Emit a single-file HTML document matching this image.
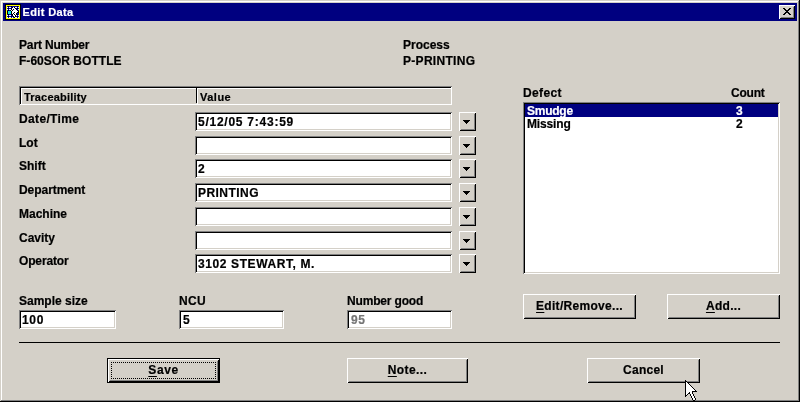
<!DOCTYPE html>
<html><head><meta charset="utf-8"><title>Edit Data</title>
<style>
html,body{margin:0;padding:0;}
body{width:800px;height:402px;overflow:hidden;background:#d4d0c8;font-family:"Liberation Sans",sans-serif;font-size:12px;font-weight:bold;color:#000;position:relative;-webkit-text-stroke:0.2px currentColor;}
#root{position:absolute;left:0;top:0;width:800px;height:402px;will-change:transform;}
.a{position:absolute;box-sizing:border-box;}
.t{position:absolute;white-space:pre;line-height:14px;height:14px;}
#win{left:0;top:0;width:800px;height:402px;background:#d4d0c8;box-shadow:inset -1px -1px 0 #000,inset 1px 1px 0 #d4d0c8,inset -2px -2px 0 #808080,inset 2px 2px 0 #fff;}
#title{left:3px;top:3px;width:794px;height:18px;background:#000080;}
#ttext{left:22.5px;top:5px;color:#fff;font-size:11px;letter-spacing:0.38px;}
.in{background:#fff;box-shadow:inset 1px 1px 0 #808080,inset -1px -1px 0 #fff,inset 2px 2px 0 #000,inset -2px -2px 0 #d4d0c8;}
.btn{background:#d4d0c8;box-shadow:inset 1px 1px 0 #fff,inset -1px -1px 0 #000,inset 2px 2px 0 #d4d0c8,inset -2px -2px 0 #808080;}
.def{background:#d4d0c8;box-shadow:inset 0 0 0 1px #000,inset 2px 2px 0 #fff,inset -2px -2px 0 #000,inset 3px 3px 0 #d4d0c8,inset -3px -3px 0 #808080;}
.bt{position:absolute;left:0;right:0;text-align:center;white-space:pre;line-height:14px;}
u{text-decoration:underline;text-decoration-thickness:1px;text-underline-offset:1.5px;text-decoration-skip-ink:none;}
.hdr{box-shadow:inset 1px 1px 0 #808080,inset -1px -1px 0 #fff,inset 2px 2px 0 #000,inset 3px 3px 0 #fff;}
.arr{position:absolute;left:5px;top:8px;width:0;height:0;border-left:4px solid transparent;border-right:4px solid transparent;border-top:4px solid #000;}
.foc{left:4px;top:4px;width:105px;height:17px;border:1px dotted #000;}
</style></head><body><div id="root">
<div class="a" id="win"></div>
<div class="a" id="title"></div>
<span class="t" id="ttext">Edit Data</span>
<svg class="a" style="left:5px;top:4px;" width="16" height="16" viewBox="0 0 16 16" shape-rendering="crispEdges"><rect x="0" y="0" width="16" height="1" fill="#000"/><rect x="0" y="1" width="1" height="1" fill="#000"/><rect x="1" y="1" width="14" height="1" fill="#ffff00"/><rect x="15" y="1" width="1" height="1" fill="#000"/><rect x="0" y="2" width="1" height="1" fill="#000"/><rect x="1" y="2" width="1" height="1" fill="#ffff00"/><rect x="2" y="2" width="1" height="1" fill="#0000a8"/><rect x="3" y="2" width="1" height="1" fill="#000"/><rect x="4" y="2" width="2" height="1" fill="#0000a8"/><rect x="6" y="2" width="1" height="1" fill="#000"/><rect x="7" y="2" width="5" height="1" fill="#0000a8"/><rect x="12" y="2" width="1" height="1" fill="#000"/><rect x="13" y="2" width="1" height="1" fill="#0000a8"/><rect x="14" y="2" width="1" height="1" fill="#ffff00"/><rect x="15" y="2" width="1" height="1" fill="#000"/><rect x="0" y="3" width="1" height="1" fill="#000"/><rect x="1" y="3" width="1" height="1" fill="#ffff00"/><rect x="2" y="3" width="1" height="1" fill="#fff"/><rect x="3" y="3" width="1" height="1" fill="#0000a8"/><rect x="4" y="3" width="2" height="1" fill="#fff"/><rect x="6" y="3" width="1" height="1" fill="#0000a8"/><rect x="7" y="3" width="1" height="1" fill="#000"/><rect x="8" y="3" width="1" height="1" fill="#fff"/><rect x="9" y="3" width="1" height="1" fill="#000"/><rect x="10" y="3" width="2" height="1" fill="#fff"/><rect x="12" y="3" width="1" height="1" fill="#0000a8"/><rect x="13" y="3" width="1" height="1" fill="#fff"/><rect x="14" y="3" width="1" height="1" fill="#ffff00"/><rect x="15" y="3" width="1" height="1" fill="#000"/><rect x="0" y="4" width="1" height="1" fill="#000"/><rect x="1" y="4" width="1" height="1" fill="#ffff00"/><rect x="2" y="4" width="1" height="1" fill="#0000a8"/><rect x="3" y="4" width="1" height="1" fill="#000"/><rect x="4" y="4" width="2" height="1" fill="#0000a8"/><rect x="6" y="4" width="1" height="1" fill="#000"/><rect x="7" y="4" width="3" height="1" fill="#fff"/><rect x="10" y="4" width="1" height="1" fill="#000"/><rect x="11" y="4" width="1" height="1" fill="#0000a8"/><rect x="12" y="4" width="1" height="1" fill="#000"/><rect x="13" y="4" width="1" height="1" fill="#0000a8"/><rect x="14" y="4" width="1" height="1" fill="#ffff00"/><rect x="15" y="4" width="1" height="1" fill="#000"/><rect x="0" y="5" width="1" height="1" fill="#000"/><rect x="1" y="5" width="1" height="1" fill="#ffff00"/><rect x="2" y="5" width="1" height="1" fill="#fff"/><rect x="3" y="5" width="1" height="1" fill="#0000a8"/><rect x="4" y="5" width="2" height="1" fill="#fff"/><rect x="6" y="5" width="1" height="1" fill="#000"/><rect x="7" y="5" width="1" height="1" fill="#fff"/><rect x="8" y="5" width="1" height="1" fill="#000"/><rect x="9" y="5" width="2" height="1" fill="#fff"/><rect x="11" y="5" width="1" height="1" fill="#000"/><rect x="12" y="5" width="1" height="1" fill="#0000a8"/><rect x="13" y="5" width="1" height="1" fill="#fff"/><rect x="14" y="5" width="1" height="1" fill="#ffff00"/><rect x="15" y="5" width="1" height="1" fill="#000"/><rect x="0" y="6" width="1" height="1" fill="#000"/><rect x="1" y="6" width="1" height="1" fill="#ffff00"/><rect x="2" y="6" width="1" height="1" fill="#0000a8"/><rect x="3" y="6" width="1" height="1" fill="#000"/><rect x="4" y="6" width="1" height="1" fill="#0000a8"/><rect x="5" y="6" width="1" height="1" fill="#000"/><rect x="6" y="6" width="1" height="1" fill="#fff"/><rect x="7" y="6" width="1" height="1" fill="#000"/><rect x="8" y="6" width="4" height="1" fill="#fff"/><rect x="12" y="6" width="1" height="1" fill="#000"/><rect x="13" y="6" width="1" height="1" fill="#0000a8"/><rect x="14" y="6" width="1" height="1" fill="#ffff00"/><rect x="15" y="6" width="1" height="1" fill="#000"/><rect x="0" y="7" width="1" height="1" fill="#000"/><rect x="1" y="7" width="1" height="1" fill="#ffff00"/><rect x="2" y="7" width="1" height="1" fill="#000"/><rect x="3" y="7" width="3" height="1" fill="#00e8e8"/><rect x="6" y="7" width="1" height="1" fill="#000"/><rect x="7" y="7" width="6" height="1" fill="#fff"/><rect x="13" y="7" width="1" height="1" fill="#000"/><rect x="14" y="7" width="1" height="1" fill="#ffff00"/><rect x="15" y="7" width="1" height="1" fill="#000"/><rect x="0" y="8" width="1" height="1" fill="#000"/><rect x="1" y="8" width="1" height="1" fill="#ffff00"/><rect x="2" y="8" width="1" height="1" fill="#000"/><rect x="3" y="8" width="1" height="1" fill="#00e8e8"/><rect x="4" y="8" width="1" height="1" fill="#a0a0c0"/><rect x="5" y="8" width="1" height="1" fill="#00e8e8"/><rect x="6" y="8" width="1" height="1" fill="#000"/><rect x="7" y="8" width="2" height="1" fill="#fff"/><rect x="9" y="8" width="1" height="1" fill="#000"/><rect x="10" y="8" width="2" height="1" fill="#fff"/><rect x="12" y="8" width="2" height="1" fill="#000"/><rect x="14" y="8" width="1" height="1" fill="#ffff00"/><rect x="15" y="8" width="1" height="1" fill="#000"/><rect x="0" y="9" width="1" height="1" fill="#000"/><rect x="1" y="9" width="1" height="1" fill="#ffff00"/><rect x="2" y="9" width="1" height="1" fill="#000"/><rect x="3" y="9" width="3" height="1" fill="#00e8e8"/><rect x="6" y="9" width="1" height="1" fill="#000"/><rect x="7" y="9" width="1" height="1" fill="#fff"/><rect x="8" y="9" width="1" height="1" fill="#000"/><rect x="9" y="9" width="2" height="1" fill="#fff"/><rect x="11" y="9" width="1" height="1" fill="#000"/><rect x="12" y="9" width="2" height="1" fill="#0000a8"/><rect x="14" y="9" width="1" height="1" fill="#ffff00"/><rect x="15" y="9" width="1" height="1" fill="#000"/><rect x="0" y="10" width="1" height="1" fill="#000"/><rect x="1" y="10" width="1" height="1" fill="#ffff00"/><rect x="2" y="10" width="1" height="1" fill="#0000a8"/><rect x="3" y="10" width="1" height="1" fill="#000"/><rect x="4" y="10" width="2" height="1" fill="#0000a8"/><rect x="6" y="10" width="2" height="1" fill="#000"/><rect x="8" y="10" width="1" height="1" fill="#fff"/><rect x="9" y="10" width="1" height="1" fill="#000"/><rect x="10" y="10" width="1" height="1" fill="#fff"/><rect x="11" y="10" width="2" height="1" fill="#000"/><rect x="13" y="10" width="1" height="1" fill="#0000a8"/><rect x="14" y="10" width="1" height="1" fill="#ffff00"/><rect x="15" y="10" width="1" height="1" fill="#000"/><rect x="0" y="11" width="1" height="1" fill="#000"/><rect x="1" y="11" width="1" height="1" fill="#ffff00"/><rect x="2" y="11" width="1" height="1" fill="#fff"/><rect x="3" y="11" width="1" height="1" fill="#0000a8"/><rect x="4" y="11" width="2" height="1" fill="#fff"/><rect x="6" y="11" width="1" height="1" fill="#0000a8"/><rect x="7" y="11" width="1" height="1" fill="#000"/><rect x="8" y="11" width="2" height="1" fill="#fff"/><rect x="10" y="11" width="1" height="1" fill="#000"/><rect x="11" y="11" width="1" height="1" fill="#fff"/><rect x="12" y="11" width="1" height="1" fill="#0000a8"/><rect x="13" y="11" width="1" height="1" fill="#fff"/><rect x="14" y="11" width="1" height="1" fill="#ffff00"/><rect x="15" y="11" width="1" height="1" fill="#000"/><rect x="0" y="12" width="1" height="1" fill="#000"/><rect x="1" y="12" width="1" height="1" fill="#ffff00"/><rect x="2" y="12" width="1" height="1" fill="#0000a8"/><rect x="3" y="12" width="1" height="1" fill="#000"/><rect x="4" y="12" width="2" height="1" fill="#0000a8"/><rect x="6" y="12" width="1" height="1" fill="#000"/><rect x="7" y="12" width="1" height="1" fill="#0000a8"/><rect x="8" y="12" width="1" height="1" fill="#000"/><rect x="9" y="12" width="1" height="1" fill="#fff"/><rect x="10" y="12" width="1" height="1" fill="#000"/><rect x="11" y="12" width="1" height="1" fill="#0000a8"/><rect x="12" y="12" width="1" height="1" fill="#000"/><rect x="13" y="12" width="1" height="1" fill="#0000a8"/><rect x="14" y="12" width="1" height="1" fill="#ffff00"/><rect x="15" y="12" width="1" height="1" fill="#000"/><rect x="0" y="13" width="1" height="1" fill="#000"/><rect x="1" y="13" width="1" height="1" fill="#ffff00"/><rect x="2" y="13" width="1" height="1" fill="#fff"/><rect x="3" y="13" width="1" height="1" fill="#0000a8"/><rect x="4" y="13" width="2" height="1" fill="#fff"/><rect x="6" y="13" width="1" height="1" fill="#0000a8"/><rect x="7" y="13" width="1" height="1" fill="#fff"/><rect x="8" y="13" width="1" height="1" fill="#0000a8"/><rect x="9" y="13" width="1" height="1" fill="#000"/><rect x="10" y="13" width="2" height="1" fill="#fff"/><rect x="12" y="13" width="1" height="1" fill="#0000a8"/><rect x="13" y="13" width="1" height="1" fill="#fff"/><rect x="14" y="13" width="1" height="1" fill="#ffff00"/><rect x="15" y="13" width="1" height="1" fill="#000"/><rect x="0" y="14" width="1" height="1" fill="#000"/><rect x="1" y="14" width="14" height="1" fill="#ffff00"/><rect x="15" y="14" width="1" height="1" fill="#000"/><rect x="0" y="15" width="16" height="1" fill="#000"/></svg>
<div class="a btn" style="left:779px;top:5px;width:16px;height:14px"><svg class="a" style="left:4px;top:3px;" width="8" height="7" viewBox="0 0 8 7" shape-rendering="crispEdges"><rect x="0" y="0" width="2" height="1" fill="#000"/><rect x="6" y="0" width="2" height="1" fill="#000"/><rect x="1" y="1" width="2" height="1" fill="#000"/><rect x="5" y="1" width="2" height="1" fill="#000"/><rect x="2" y="2" width="4" height="1" fill="#000"/><rect x="3" y="3" width="2" height="1" fill="#000"/><rect x="2" y="4" width="4" height="1" fill="#000"/><rect x="1" y="5" width="2" height="1" fill="#000"/><rect x="5" y="5" width="2" height="1" fill="#000"/><rect x="0" y="6" width="2" height="1" fill="#000"/><rect x="6" y="6" width="2" height="1" fill="#000"/></svg></div>
<span class="t" style="left:19px;top:38px;letter-spacing:-0.15px">Part Number</span>
<span class="t" style="left:19px;top:54px;letter-spacing:0.04px">F-60SOR BOTTLE</span>
<span class="t" style="left:403px;top:38px">Process</span>
<span class="t" style="left:403px;top:54px;letter-spacing:0.3px">P-PRINTING</span>
<div class="a" style="left:19px;top:86px;width:433px;height:19px;box-shadow:inset 1px 1px 0 #808080,inset -1px -1px 0 #fff,inset 2px 2px 0 #000"></div>
<div class="a" style="left:21px;top:88px;width:175px;height:16px;border-top:1px solid #fff;border-left:1px solid #fff"></div>
<div class="a" style="left:196px;top:88px;width:1px;height:15px;background:#000"></div>
<div class="a" style="left:197px;top:88px;width:254px;height:16px;border-top:1px solid #fff;border-left:1px solid #fff"></div>
<span class="t" style="left:24px;top:90px;letter-spacing:0.2px;font-size:11px">Traceability</span>
<span class="t" style="left:200px;top:90px;letter-spacing:0.5px;font-size:11px">Value</span>
<span class="t" style="left:19px;top:112px;letter-spacing:0.35px">Date/Time</span>
<div class="a in" style="left:195px;top:112px;width:257px;height:19px"></div>
<span class="t" style="left:198px;top:115px;letter-spacing:0.75px">5/12/05 7:43:59</span>
<div class="a btn" style="left:459px;top:112px;width:17px;height:19px"><svg class="a" style="left:4px;top:8px;" width="7" height="4" viewBox="0 0 7 4" shape-rendering="crispEdges"><rect x="0" y="0" width="7" height="1" fill="#000"/><rect x="1" y="1" width="5" height="1" fill="#000"/><rect x="2" y="2" width="3" height="1" fill="#000"/><rect x="3" y="3" width="1" height="1" fill="#000"/></svg></div>
<span class="t" style="left:19px;top:136px">Lot</span>
<div class="a in" style="left:195px;top:136px;width:257px;height:19px"></div>
<div class="a btn" style="left:459px;top:136px;width:17px;height:19px"><svg class="a" style="left:4px;top:8px;" width="7" height="4" viewBox="0 0 7 4" shape-rendering="crispEdges"><rect x="0" y="0" width="7" height="1" fill="#000"/><rect x="1" y="1" width="5" height="1" fill="#000"/><rect x="2" y="2" width="3" height="1" fill="#000"/><rect x="3" y="3" width="1" height="1" fill="#000"/></svg></div>
<span class="t" style="left:19px;top:159px">Shift</span>
<div class="a in" style="left:195px;top:159px;width:257px;height:19px"></div>
<span class="t" style="left:198px;top:162px">2</span>
<div class="a btn" style="left:459px;top:159px;width:17px;height:19px"><svg class="a" style="left:4px;top:8px;" width="7" height="4" viewBox="0 0 7 4" shape-rendering="crispEdges"><rect x="0" y="0" width="7" height="1" fill="#000"/><rect x="1" y="1" width="5" height="1" fill="#000"/><rect x="2" y="2" width="3" height="1" fill="#000"/><rect x="3" y="3" width="1" height="1" fill="#000"/></svg></div>
<span class="t" style="left:19px;top:183px;letter-spacing:-0.05px">Department</span>
<div class="a in" style="left:195px;top:183px;width:257px;height:19px"></div>
<span class="t" style="left:198px;top:186px;letter-spacing:0.45px">PRINTING</span>
<div class="a btn" style="left:459px;top:183px;width:17px;height:19px"><svg class="a" style="left:4px;top:8px;" width="7" height="4" viewBox="0 0 7 4" shape-rendering="crispEdges"><rect x="0" y="0" width="7" height="1" fill="#000"/><rect x="1" y="1" width="5" height="1" fill="#000"/><rect x="2" y="2" width="3" height="1" fill="#000"/><rect x="3" y="3" width="1" height="1" fill="#000"/></svg></div>
<span class="t" style="left:19px;top:207px">Machine</span>
<div class="a in" style="left:195px;top:207px;width:257px;height:19px"></div>
<div class="a btn" style="left:459px;top:207px;width:17px;height:19px"><svg class="a" style="left:4px;top:8px;" width="7" height="4" viewBox="0 0 7 4" shape-rendering="crispEdges"><rect x="0" y="0" width="7" height="1" fill="#000"/><rect x="1" y="1" width="5" height="1" fill="#000"/><rect x="2" y="2" width="3" height="1" fill="#000"/><rect x="3" y="3" width="1" height="1" fill="#000"/></svg></div>
<span class="t" style="left:19px;top:231px">Cavity</span>
<div class="a in" style="left:195px;top:231px;width:257px;height:19px"></div>
<div class="a btn" style="left:459px;top:231px;width:17px;height:19px"><svg class="a" style="left:4px;top:8px;" width="7" height="4" viewBox="0 0 7 4" shape-rendering="crispEdges"><rect x="0" y="0" width="7" height="1" fill="#000"/><rect x="1" y="1" width="5" height="1" fill="#000"/><rect x="2" y="2" width="3" height="1" fill="#000"/><rect x="3" y="3" width="1" height="1" fill="#000"/></svg></div>
<span class="t" style="left:19px;top:254px;letter-spacing:-0.15px">Operator</span>
<div class="a in" style="left:195px;top:254px;width:257px;height:19px"></div>
<span class="t" style="left:198px;top:257px;letter-spacing:0.6px">3102 STEWART, M.</span>
<div class="a btn" style="left:459px;top:254px;width:17px;height:19px"><svg class="a" style="left:4px;top:8px;" width="7" height="4" viewBox="0 0 7 4" shape-rendering="crispEdges"><rect x="0" y="0" width="7" height="1" fill="#000"/><rect x="1" y="1" width="5" height="1" fill="#000"/><rect x="2" y="2" width="3" height="1" fill="#000"/><rect x="3" y="3" width="1" height="1" fill="#000"/></svg></div>
<span class="t" style="left:523px;top:86px;letter-spacing:0.35px">Defect</span>
<span class="t" style="left:731px;top:86px;letter-spacing:-0.2px">Count</span>
<div class="a in" style="left:523px;top:102px;width:257px;height:172px"></div>
<div class="a" style="left:525px;top:104px;width:253px;height:13px;background:#000080"></div>
<span class="t" style="left:527px;top:104px;letter-spacing:-0.25px;color:#fff">Smudge</span>
<span class="t" style="left:736px;top:104px;color:#fff">3</span>
<span class="t" style="left:527px;top:117px;letter-spacing:-0.15px">Missing</span>
<span class="t" style="left:736px;top:117px">2</span>
<div class="a btn" style="left:523px;top:294px;width:113px;height:25px"><span class="bt" style="top:5px;letter-spacing:0.3px"><u>E</u>dit/Remove...</span></div>
<div class="a btn" style="left:667px;top:294px;width:113px;height:25px"><span class="bt" style="top:5px;letter-spacing:0.3px"><u>A</u>dd...</span></div>
<span class="t" style="left:19px;top:294px">Sample size</span>
<span class="t" style="left:179px;top:294px;letter-spacing:0.3px">NCU</span>
<span class="t" style="left:347px;top:294px;letter-spacing:-0.17px">Number good</span>
<div class="a in" style="left:19px;top:310px;width:97px;height:19px"></div>
<div class="a in" style="left:179px;top:310px;width:105px;height:19px"></div>
<div class="a in" style="left:347px;top:310px;width:105px;height:19px"></div>
<span class="t" style="left:22px;top:313px;letter-spacing:0.7px">100</span>
<span class="t" style="left:183px;top:313px">5</span>
<span class="t" style="left:351px;top:313px;letter-spacing:0.7px;color:#757575">95</span>
<div class="a" style="left:19px;top:342px;width:761px;height:1px;background:#000"></div>
<div class="a def" style="left:107px;top:358px;width:113px;height:25px"><span class="bt" style="top:5px;letter-spacing:0.6px"><u>S</u>ave</span><div class="a foc"></div></div>
<div class="a btn" style="left:347px;top:358px;width:121px;height:25px"><span class="bt" style="top:5px;letter-spacing:0.4px"><u>N</u>ote...</span></div>
<div class="a btn" style="left:587px;top:358px;width:113px;height:25px"><span class="bt" style="top:5px;letter-spacing:0.25px">Cancel</span></div>
<svg class="a" style="left:685px;top:380px;" width="12" height="21" viewBox="0 0 12 21" shape-rendering="crispEdges"><rect x="0" y="0" width="1" height="1" fill="#000"/><rect x="0" y="1" width="2" height="1" fill="#000"/><rect x="0" y="2" width="1" height="1" fill="#000"/><rect x="1" y="2" width="1" height="1" fill="#fff"/><rect x="2" y="2" width="1" height="1" fill="#000"/><rect x="0" y="3" width="1" height="1" fill="#000"/><rect x="1" y="3" width="2" height="1" fill="#fff"/><rect x="3" y="3" width="1" height="1" fill="#000"/><rect x="0" y="4" width="1" height="1" fill="#000"/><rect x="1" y="4" width="3" height="1" fill="#fff"/><rect x="4" y="4" width="1" height="1" fill="#000"/><rect x="0" y="5" width="1" height="1" fill="#000"/><rect x="1" y="5" width="4" height="1" fill="#fff"/><rect x="5" y="5" width="1" height="1" fill="#000"/><rect x="0" y="6" width="1" height="1" fill="#000"/><rect x="1" y="6" width="5" height="1" fill="#fff"/><rect x="6" y="6" width="1" height="1" fill="#000"/><rect x="0" y="7" width="1" height="1" fill="#000"/><rect x="1" y="7" width="6" height="1" fill="#fff"/><rect x="7" y="7" width="1" height="1" fill="#000"/><rect x="0" y="8" width="1" height="1" fill="#000"/><rect x="1" y="8" width="7" height="1" fill="#fff"/><rect x="8" y="8" width="1" height="1" fill="#000"/><rect x="0" y="9" width="1" height="1" fill="#000"/><rect x="1" y="9" width="8" height="1" fill="#fff"/><rect x="9" y="9" width="1" height="1" fill="#000"/><rect x="0" y="10" width="1" height="1" fill="#000"/><rect x="1" y="10" width="9" height="1" fill="#fff"/><rect x="10" y="10" width="1" height="1" fill="#000"/><rect x="0" y="11" width="1" height="1" fill="#000"/><rect x="1" y="11" width="6" height="1" fill="#fff"/><rect x="7" y="11" width="5" height="1" fill="#000"/><rect x="0" y="12" width="1" height="1" fill="#000"/><rect x="1" y="12" width="3" height="1" fill="#fff"/><rect x="4" y="12" width="1" height="1" fill="#000"/><rect x="5" y="12" width="2" height="1" fill="#fff"/><rect x="7" y="12" width="1" height="1" fill="#000"/><rect x="0" y="13" width="1" height="1" fill="#000"/><rect x="1" y="13" width="2" height="1" fill="#fff"/><rect x="3" y="13" width="2" height="1" fill="#000"/><rect x="5" y="13" width="2" height="1" fill="#fff"/><rect x="7" y="13" width="1" height="1" fill="#000"/><rect x="0" y="14" width="1" height="1" fill="#000"/><rect x="1" y="14" width="1" height="1" fill="#fff"/><rect x="2" y="14" width="1" height="1" fill="#000"/><rect x="5" y="14" width="1" height="1" fill="#000"/><rect x="6" y="14" width="2" height="1" fill="#fff"/><rect x="8" y="14" width="1" height="1" fill="#000"/><rect x="0" y="15" width="2" height="1" fill="#000"/><rect x="5" y="15" width="1" height="1" fill="#000"/><rect x="6" y="15" width="2" height="1" fill="#fff"/><rect x="8" y="15" width="1" height="1" fill="#000"/><rect x="0" y="16" width="1" height="1" fill="#000"/><rect x="6" y="16" width="1" height="1" fill="#000"/><rect x="7" y="16" width="2" height="1" fill="#fff"/><rect x="9" y="16" width="1" height="1" fill="#000"/><rect x="6" y="17" width="1" height="1" fill="#000"/><rect x="7" y="17" width="2" height="1" fill="#fff"/><rect x="9" y="17" width="1" height="1" fill="#000"/><rect x="7" y="18" width="1" height="1" fill="#000"/><rect x="8" y="18" width="2" height="1" fill="#fff"/><rect x="10" y="18" width="1" height="1" fill="#000"/><rect x="7" y="19" width="1" height="1" fill="#000"/><rect x="8" y="19" width="2" height="1" fill="#fff"/><rect x="10" y="19" width="1" height="1" fill="#000"/><rect x="8" y="20" width="2" height="1" fill="#000"/></svg>
</div></body></html>
